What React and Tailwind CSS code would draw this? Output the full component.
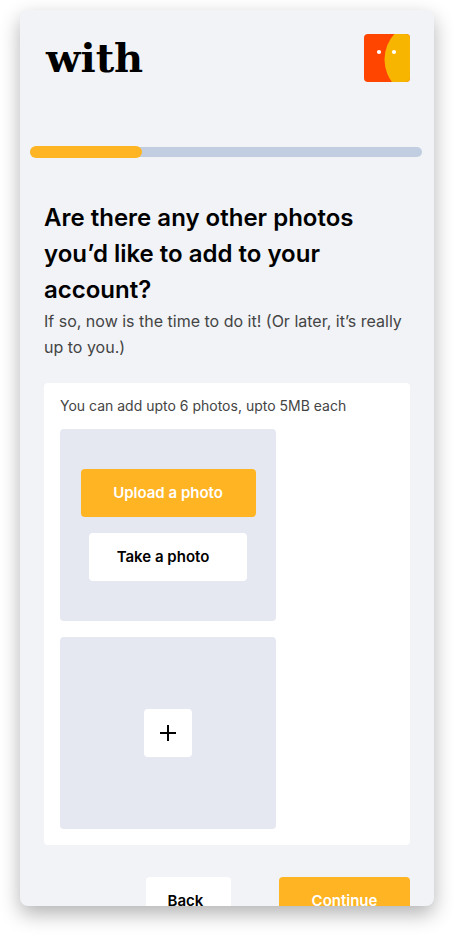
function Button({ variant = 'secondary', className = '', children, ...props }) {
  const colors = variant === 'primary'
    ? 'bg-[#ffb423] text-white hover:bg-[#f5a814]'
    : 'bg-white text-black hover:bg-gray-50'

  return (
    <button
      type="button"
      className={`h-12 shrink-0 rounded text-[15px] font-semibold whitespace-nowrap transition-colors ${colors} ${className}`}
      {...props}
    >
      {children}
    </button>
  )
}

function Avatar() {
  return (
    <svg className="h-12 w-[46px] rounded" viewBox="0 0 46 48" role="img" aria-label="Profile">
      <rect width="46" height="48" fill="#ff4500" />
      <circle cx="58.5" cy="25.5" r="38" fill="#f7b500" />
      <circle cx="15" cy="18" r="2.1" fill="#fff" />
      <circle cx="30" cy="18" r="2.1" fill="#fff" />
    </svg>
  )
}

function PlusIcon() {
  return (
    <svg className="size-4" viewBox="0 0 16 16" stroke="currentColor" strokeWidth="2" aria-hidden="true">
      <path d="M8 0v16M0 8h16" />
    </svg>
  )
}

function ProgressBar({ step, total }) {
  return (
    <div
      role="progressbar"
      aria-valuemin={0}
      aria-valuemax={total}
      aria-valuenow={step}
      aria-label="Sign up progress"
      className="mt-16 mr-3 ml-2.5 grid items-center"
    >
      <div className="col-start-1 row-start-1 h-2.5 rounded-full bg-[#c1cde0]" />
      <div
        className="col-start-1 row-start-1 h-3 rounded-full bg-[#ffb423]"
        style={{ width: `${(step / total) * 100}%` }}
      />
    </div>
  )
}

function PhotoSlot({ children }) {
  return (
    <div className="flex h-48 w-full max-w-54 flex-col items-center justify-center gap-4 rounded bg-[#e5e8f0]">
      {children}
    </div>
  )
}

export default function App() {
  return (
    <div className="flex h-screen bg-white px-5 pt-2.5 pb-[30px] font-['Inter',sans-serif]">
      <div className="flex-1 overflow-hidden rounded-lg bg-[#f1f3f7] pt-6 shadow-[0_8px_20px_rgba(0,0,0,0.3)]">
        <header className="flex items-center justify-between pr-6 pl-[26px]">
          <a href="#" className="font-['DejaVu_Serif',serif] text-[40px] leading-12 font-bold text-black">
            with
          </a>
          <Avatar />
        </header>

        <ProgressBar step={2} total={7} />

        <main className="px-6 pt-[42px]">
          <h1 className="text-2xl leading-9 font-semibold text-black">
            Are there any other photos you’d like to add to your account?
          </h1>
          <p className="leading-[26px] text-[#444]">
            If so, now is the time to do it! (Or later, it’s really up to you.)
          </p>

          <section className="mt-[23px] rounded bg-white px-4 pt-3 pb-4">
            <p className="mb-3 text-sm leading-[22px] text-[#444]">
              You can add upto 6 photos, upto 5MB each
            </p>
            <div className="flex flex-col gap-4">
              <PhotoSlot>
                <Button variant="primary" className="w-[175px]">Upload a photo</Button>
                <Button className="w-[158px] pr-2.5">Take a photo</Button>
              </PhotoSlot>
              <PhotoSlot>
                <Button className="flex w-12 items-center justify-center" aria-label="Add photo">
                  <PlusIcon />
                </Button>
              </PhotoSlot>
            </div>
          </section>

          <div className="mt-8 flex justify-end gap-12">
            <Button className="w-[85px] pr-1.5">Back</Button>
            <Button variant="primary" className="w-[131px]">Continue</Button>
          </div>
        </main>
      </div>
    </div>
  )
}
